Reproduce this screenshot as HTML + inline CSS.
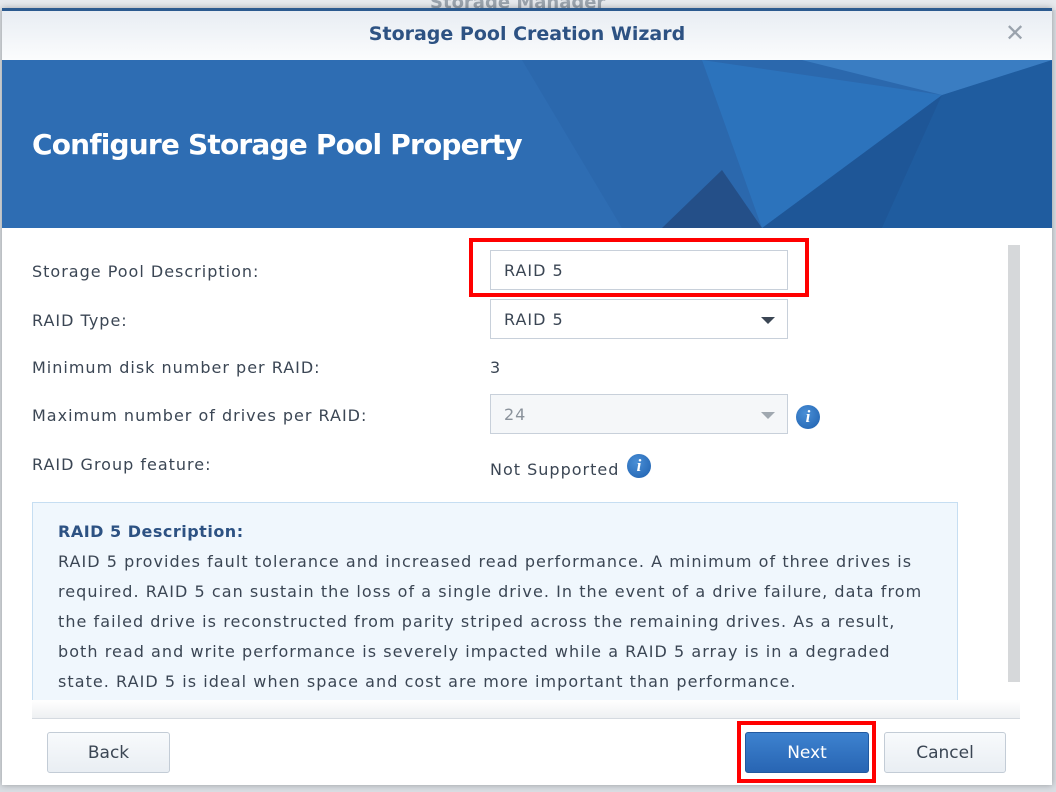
<!DOCTYPE html><html><head><style>
body{margin:0;width:1056px;height:792px;background:#d9dde2;position:relative;overflow:hidden;font-family:"DejaVu Sans","Liberation Sans",sans-serif;}
.abs{position:absolute}
.lbl{position:absolute;left:32px;font-size:16px;color:#3b4654;letter-spacing:1px}
.box{position:absolute;left:490px;width:298px;height:40px;border:1px solid #c8d0da;background:#fff;box-sizing:border-box;font-size:16px;color:#3b4654;padding-left:13px;line-height:40px;letter-spacing:1px}
.info{position:absolute;width:24px;height:24px;border-radius:50%;background:radial-gradient(circle at 40% 35%,#4a8fd6,#1d5fae);color:#fff;font:bold italic 17px "Liberation Serif",serif;text-align:center;line-height:24px}
.btn{position:absolute;top:732px;height:41px;border:1px solid #c3ccd6;border-radius:3px;background:linear-gradient(#f8fafc,#e9eef3);box-sizing:border-box;font-size:17px;color:#3b4654;text-align:center;line-height:41px}
</style></head><body>
<div class="abs" style="left:0;top:0;width:1056px;height:10px;background:#e6e9ed"></div>
<div class="abs" style="left:430px;top:-8px;font:bold 18px 'DejaVu Sans',sans-serif;color:#9aa3ad">Storage Manager</div>
<div class="abs" style="left:2px;top:8px;width:1050px;height:777px;background:#fff;box-shadow:0 0 6px rgba(0,0,0,.3)"></div>
<div class="abs" style="left:2px;top:8px;width:1050px;height:3px;background:#2b5a8f"></div>
<div class="abs" style="left:2px;top:11px;width:1050px;height:49px;background:linear-gradient(#e8edf3,#fbfcfd)"></div>
<div class="abs" style="left:2px;top:23px;width:1050px;text-align:center;font:bold 19px 'DejaVu Sans',sans-serif;color:#2d5283;letter-spacing:0px">Storage Pool Creation Wizard</div>
<div class="abs" style="left:1005px;top:21px;font-size:24px;color:#9aa3ad;line-height:24px">✕</div>
<div class="abs" style="left:2px;top:60px;width:1050px;height:168px;background:#2e6db3;overflow:hidden">
<svg width="1050" height="168" style="position:absolute;left:0;top:0">
<polygon points="520,0 1050,0 1050,168 620,168" fill="#2b68ad"/>
<polygon points="940,35 1050,0 1050,168 880,168" fill="#1f5c9f"/>
<polygon points="940,35 760,168 880,168" fill="#1e5697"/>
<polygon points="700,0 940,35 760,168" fill="#2c73bc"/>
<polygon points="940,35 1050,0 800,0" fill="#3a7dc2"/>
<polygon points="660,168 760,168 720,110" fill="#244f88"/>
</svg>
<div class="abs" style="left:30px;top:68px;font:bold 28px 'DejaVu Sans',sans-serif;color:#fff;letter-spacing:-0.8px">Configure Storage Pool Property</div>
</div>
<div class="lbl" style="top:262px">Storage Pool Description:</div>
<div class="lbl" style="top:311px">RAID Type:</div>
<div class="lbl" style="top:358px">Minimum disk number per RAID:</div>
<div class="lbl" style="top:406px">Maximum number of drives per RAID:</div>
<div class="lbl" style="top:455px">RAID Group feature:</div>
<div class="box" style="top:250px">RAID 5</div>
<div class="box" style="top:299px">RAID 5<span style="position:absolute;right:12px;top:17px;border:7px solid transparent;border-top:7px solid #3b4654;border-bottom:0"></span></div>
<div class="abs" style="left:490px;top:358px;font-size:16px;color:#3b4654">3</div>
<div class="box" style="top:394px;background:#f5f7f9;color:#8a929b">24<span style="position:absolute;right:12px;top:17px;border:7px solid transparent;border-top:7px solid #a0a8b0;border-bottom:0"></span></div>
<div class="info" style="left:796px;top:405px">i</div>
<div class="abs" style="left:490px;top:460px;font-size:16px;color:#3b4654;letter-spacing:1px">Not Supported</div>
<div class="info" style="left:627px;top:454px">i</div>
<div class="abs" style="left:32px;top:502px;width:926px;height:198px;background:#f0f7fd;border:1px solid #c6def2;border-bottom:none;box-sizing:border-box;padding:17px 25px;font-size:16px;color:#3b4654;line-height:30px;letter-spacing:1.05px">
<div style="font-weight:bold;color:#2d5283;line-height:24px;margin-bottom:3px;letter-spacing:0.5px">RAID 5 Description:</div>
RAID 5 provides fault tolerance and increased read performance. A minimum of three drives is required. RAID 5 can sustain the loss of a single drive. In the event of a drive failure, data from the failed drive is reconstructed from parity striped across the remaining drives. As a result, both read and write performance is severely impacted while a RAID 5 array is in a degraded state. RAID 5 is ideal when space and cost are more important than performance.</div>
<div class="abs" style="left:32px;top:700px;width:988px;height:18px;background:linear-gradient(#fff,#eef0f2)"></div>
<div class="abs" style="left:32px;top:718px;width:988px;height:1px;background:#d5dae0"></div>
<div class="abs" style="left:1008px;top:245px;width:12px;height:437px;background:#d6d8da"></div>
<div class="btn" style="left:47px;width:123px">Back</div>
<div class="btn" style="left:745px;width:124px;background:linear-gradient(#3d82cf,#2865b3);border-color:#2159a0;color:#fff">Next</div>
<div class="btn" style="left:884px;width:122px">Cancel</div>
<div class="abs" style="left:469px;top:238px;width:340px;height:59px;border:4px solid #f00;box-sizing:border-box"></div>
<div class="abs" style="left:737px;top:721px;width:139px;height:62px;border:4px solid #f00;box-sizing:border-box"></div>
</body></html>
